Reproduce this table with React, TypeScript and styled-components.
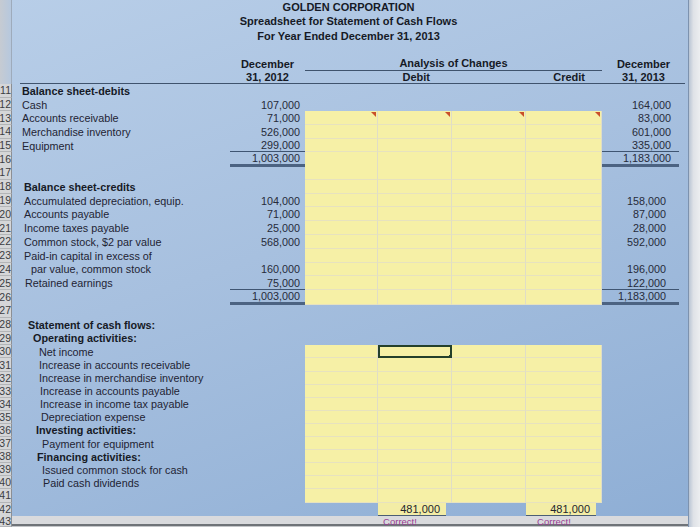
import React from "react";
import styled, { createGlobalStyle } from "styled-components";

const COLS = "12px 218px 75px 73px 74px 74px 76px 83px";

const GlobalStyle = createGlobalStyle`
  html, body { margin: 0; padding: 0; background: #cfd3d8; }
  body { font-family: "Liberation Sans", Arial, sans-serif; }
`;

const Page = styled.div`
  width: 700px;
  height: 527px;
  overflow: hidden;
  display: flex;
`;

const Sheet = styled.div`
  width: 688px;
  flex: none;
  display: flex;
  flex-direction: column;
  background: linear-gradient(160deg, #b8cee8 0%, #a7c0df 45%, #8eaed5 100%);
`;

const RightEdge = styled.div`
  flex: 1;
  background: linear-gradient(90deg, #b9c5d4 0%, #dfe2e7 40%, #eceef0 100%);
  border-left: 1px solid #7d92ae;
`;

const Header = styled.div`
  display: grid;
  grid-template-columns: ${COLS};
  grid-template-rows: 14px 14.5px 14.5px 13px 15px 13px;
  font-weight: 700;
  font-size: 11px;
  color: #161a26;
`;

const HeaderGutter = styled.div`
  grid-column: 1;
  grid-row: 1 / -1;
  background: linear-gradient(90deg, #c6cbd2 0%, #b6c8de 100%);
  border-right: 1px solid #9eabbb;
`;

const TitleLine = styled.div<{ $row: number }>`
  grid-column: 2 / -1;
  grid-row: ${(p) => p.$row};
  display: flex;
  align-items: center;
  justify-content: center;
  white-space: nowrap;
`;

const HeadCell = styled.div<{
  $col: string;
  $row: number;
  $align: "center" | "flex-end";
  $pr?: number;
  $ml?: number;
  $rule?: boolean;
}>`
  grid-column: ${(p) => p.$col};
  grid-row: ${(p) => p.$row};
  display: flex;
  align-items: center;
  justify-content: ${(p) => p.$align};
  padding-right: ${(p) => p.$pr ?? 0}px;
  margin-left: ${(p) => p.$ml ?? 0}px;
  white-space: nowrap;
  border-bottom: ${(p) => (p.$rule ? "1px solid #3f536d" : "none")};
`;

const Row = styled.div<{ $h: number }>`
  display: grid;
  grid-template-columns: ${COLS};
  height: ${(p) => p.$h}px;
  font-size: 10.8px;
  color: #1f2434;
`;

const Gutter = styled.div`
  background: #d5d6d8;
  border-right: 1px solid #8c8f94;
  border-bottom: 1px solid #b3b5b8;
  box-sizing: border-box;
  color: #3a3d42;
  font-size: 10.5px;
  display: flex;
  align-items: center;
  justify-content: flex-end;
  overflow: hidden;
  padding-right: 0;
  white-space: nowrap;
`;

const Label = styled.div<{ $indent: number; $bold?: boolean }>`
  padding-left: ${(p) => p.$indent}px;
  font-weight: ${(p) => (p.$bold ? 700 : 400)};
  color: ${(p) => (p.$bold ? "#161a26" : "#1f2434")};
  display: flex;
  align-items: center;
  white-space: nowrap;
`;

type Line = "single" | "double" | undefined;

const Amount = styled.div<{ $line?: Line; $pr: number; $mr?: number }>`
  display: flex;
  align-items: center;
  justify-content: flex-end;
  box-sizing: border-box;
  padding-right: ${(p) => p.$pr}px;
  margin-right: ${(p) => p.$mr ?? 0}px;
  white-space: nowrap;
  color: #262b3a;
  border-bottom: ${(p) =>
    p.$line === "single"
      ? "1px solid #3f5572"
      : p.$line === "double"
      ? "3px solid #4c6382"
      : "none"};
`;

const InputCell = styled.div<{ $filled: boolean; $comment?: boolean; $selected?: boolean }>`
  position: relative;
  box-sizing: border-box;
  background: ${(p) => (p.$filled ? "#f6f0a6" : "transparent")};
  border-right: ${(p) => (p.$filled ? "1px solid #e0ddc6" : "none")};
  border-bottom: ${(p) => (p.$filled ? "1px solid #e7e2bf" : "none")};
  outline: ${(p) => (p.$selected ? "2px solid #24402b" : "none")};
  outline-offset: -2px;
  &::after {
    content: "";
    display: ${(p) => (p.$comment ? "block" : "none")};
    position: absolute;
    top: 1px;
    right: 1px;
    border-style: solid;
    border-width: 0 5px 5px 0;
    border-color: transparent #c9502a transparent transparent;
  }
`;

const FillHandle = styled.span`
  position: absolute;
  right: -2px;
  bottom: -2px;
  width: 4px;
  height: 4px;
  background: #24402b;
`;

const TotalCell = styled.div`
  box-sizing: border-box;
  background: #f3eda6;
  border-bottom: 2px solid #4b5e74;
  display: flex;
  align-items: center;
  justify-content: flex-end;
  padding-right: 6px;
  margin-right: 6px;
  color: #23272f;
  font-size: 11px;
`;

const BandRow = styled(Row)`
  background: linear-gradient(180deg, #d9dadd 0 8px, #6f7378 8px 10px, #c4c6c9 10px);
`;

const CorrectNote = styled.div<{ $pr: number }>`
  display: flex;
  justify-content: center;
  align-items: flex-start;
  padding-right: ${(p) => p.$pr}px;
  font-size: 9.5px;
  line-height: 11px;
  color: #9a3c92;
  white-space: nowrap;
`;

type RowData = {
  n: number;
  label?: string;
  bold?: boolean;
  indent?: number;
  a?: string;
  b?: string;
  aLine?: Line;
  bLine?: Line;
  yellow?: boolean;
  comment?: boolean;
  selected?: number;
};

type Section = { h: number; pr: number; rows: RowData[] };

const sections: Section[] = [
  {
    h: 13.7,
    pr: 14,
    rows: [
      { n: 11, label: "Balance sheet-debits", bold: true, indent: 10 },
      { n: 12, label: "Cash", indent: 10, a: "107,000", b: "164,000" },
      { n: 13, label: "Accounts receivable", indent: 10, a: "71,000", b: "83,000", yellow: true, comment: true },
      { n: 14, label: "Merchandise inventory", indent: 10, a: "526,000", b: "601,000", yellow: true },
      { n: 15, label: "Equipment", indent: 10, a: "299,000", b: "335,000", aLine: "single", bLine: "single", yellow: true },
      { n: 16, a: "1,003,000", b: "1,183,000", aLine: "double", bLine: "double", yellow: true },
      { n: 17, yellow: true },
    ],
  },
  {
    h: 13.8,
    pr: 19,
    rows: [
      { n: 18, label: "Balance sheet-credits", bold: true, indent: 12, yellow: true },
      { n: 19, label: "Accumulated depreciation, equip.", indent: 12, a: "104,000", b: "158,000", yellow: true },
      { n: 20, label: "Accounts payable", indent: 12, a: "71,000", b: "87,000", yellow: true },
      { n: 21, label: "Income taxes payable", indent: 12, a: "25,000", b: "28,000", yellow: true },
      { n: 22, label: "Common stock, $2 par value", indent: 12, a: "568,000", b: "592,000", yellow: true },
      { n: 23, label: "Paid-in capital in excess of", indent: 12, yellow: true },
      { n: 24, label: "par value, common stock", indent: 19, a: "160,000", b: "196,000", yellow: true },
      { n: 25, label: "Retained earnings", indent: 13, a: "75,000", b: "122,000", aLine: "single", bLine: "single", yellow: true },
      { n: 26, a: "1,003,000", b: "1,183,000", aLine: "double", bLine: "double", yellow: true },
      { n: 27 },
      { n: 28, label: "Statement of cash flows:", bold: true, indent: 16 },
      { n: 29, label: "Operating activities:", bold: true, indent: 21 },
    ],
  },
  {
    h: 13.1,
    pr: 19,
    rows: [
      { n: 30, label: "Net income", indent: 27, yellow: true, selected: 1 },
      { n: 31, label: "Increase in accounts receivable", indent: 27, yellow: true },
      { n: 32, label: "Increase in merchandise inventory", indent: 27, yellow: true },
      { n: 33, label: "Increase in accounts payable", indent: 28, yellow: true },
      { n: 34, label: "Increase in income tax payable", indent: 28, yellow: true },
      { n: 35, label: "Depreciation expense", indent: 29, yellow: true },
      { n: 36, label: "Investing activities:", bold: true, indent: 24, yellow: true },
      { n: 37, label: "Payment for equipment", indent: 30, yellow: true },
      { n: 38, label: "Financing activities:", bold: true, indent: 25, yellow: true },
      { n: 39, label: "Issued common stock for cash", indent: 30, yellow: true },
      { n: 40, label: "Paid cash dividends", indent: 31, yellow: true },
      { n: 41, yellow: true },
    ],
  },
];

function SheetRow({ r, h, pr }: { r: RowData; h: number; pr: number }) {
  return (
    <Row $h={h}>
      <Gutter>{r.n}</Gutter>
      <Label $indent={r.indent ?? 10} $bold={r.bold}>
        {r.label}
      </Label>
      <Amount $pr={5} $line={r.aLine}>
        {r.a}
      </Amount>
      {[0, 1, 2, 3].map((i) => (
        <InputCell key={i} $filled={!!r.yellow} $comment={r.comment} $selected={r.selected === i}>
          {r.selected === i && <FillHandle />}
        </InputCell>
      ))}
      <Amount $pr={pr - 6} $mr={6} $line={r.bLine}>
        {r.b}
      </Amount>
    </Row>
  );
}

export default function App() {
  return (
    <>
      <GlobalStyle />
      <Page>
        <Sheet>
          <Header>
            <HeaderGutter />
            <TitleLine $row={1}>GOLDEN CORPORATION</TitleLine>
            <TitleLine $row={2}>Spreadsheet for Statement of Cash Flows</TitleLine>
            <TitleLine $row={3}>For Year Ended December 31, 2013</TitleLine>
            <HeadCell $col="3" $row={5} $align="center">December</HeadCell>
            <HeadCell $col="4 / 8" $row={5} $align="center" $rule>
              Analysis of Changes
            </HeadCell>
            <HeadCell $col="8" $row={5} $align="center">December</HeadCell>
            <HeadCell $col="2" $row={6} $align="center" $ml={8} $rule />
            <HeadCell $col="3" $row={6} $align="center" $rule>31, 2012</HeadCell>
            <HeadCell $col="4 / 6" $row={6} $align="flex-end" $pr={22} $rule>
              Debit
            </HeadCell>
            <HeadCell $col="6 / 8" $row={6} $align="flex-end" $pr={17} $rule>
              Credit
            </HeadCell>
            <HeadCell $col="8" $row={6} $align="center" $rule>31, 2013</HeadCell>
          </Header>

          {sections.map((s) =>
            s.rows.map((r) => <SheetRow key={r.n} r={r} h={s.h} pr={s.pr} />)
          )}

          <Row $h={13.1}>
            <Gutter>42</Gutter>
            <Label $indent={10} />
            <Amount $pr={5} />
            <InputCell $filled={false} />
            <TotalCell>481,000</TotalCell>
            <InputCell $filled={false} />
            <TotalCell>481,000</TotalCell>
            <Amount $pr={13} />
          </Row>
          <BandRow $h={11}>
            <Gutter>43</Gutter>
            <Label $indent={10} />
            <Amount $pr={5} />
            <InputCell $filled={false} />
            <CorrectNote $pr={30}>Correct!</CorrectNote>
            <InputCell $filled={false} />
            <CorrectNote $pr={20}>Correct!</CorrectNote>
            <Amount $pr={13} />
          </BandRow>
        </Sheet>
        <RightEdge />
      </Page>
    </>
  );
}
